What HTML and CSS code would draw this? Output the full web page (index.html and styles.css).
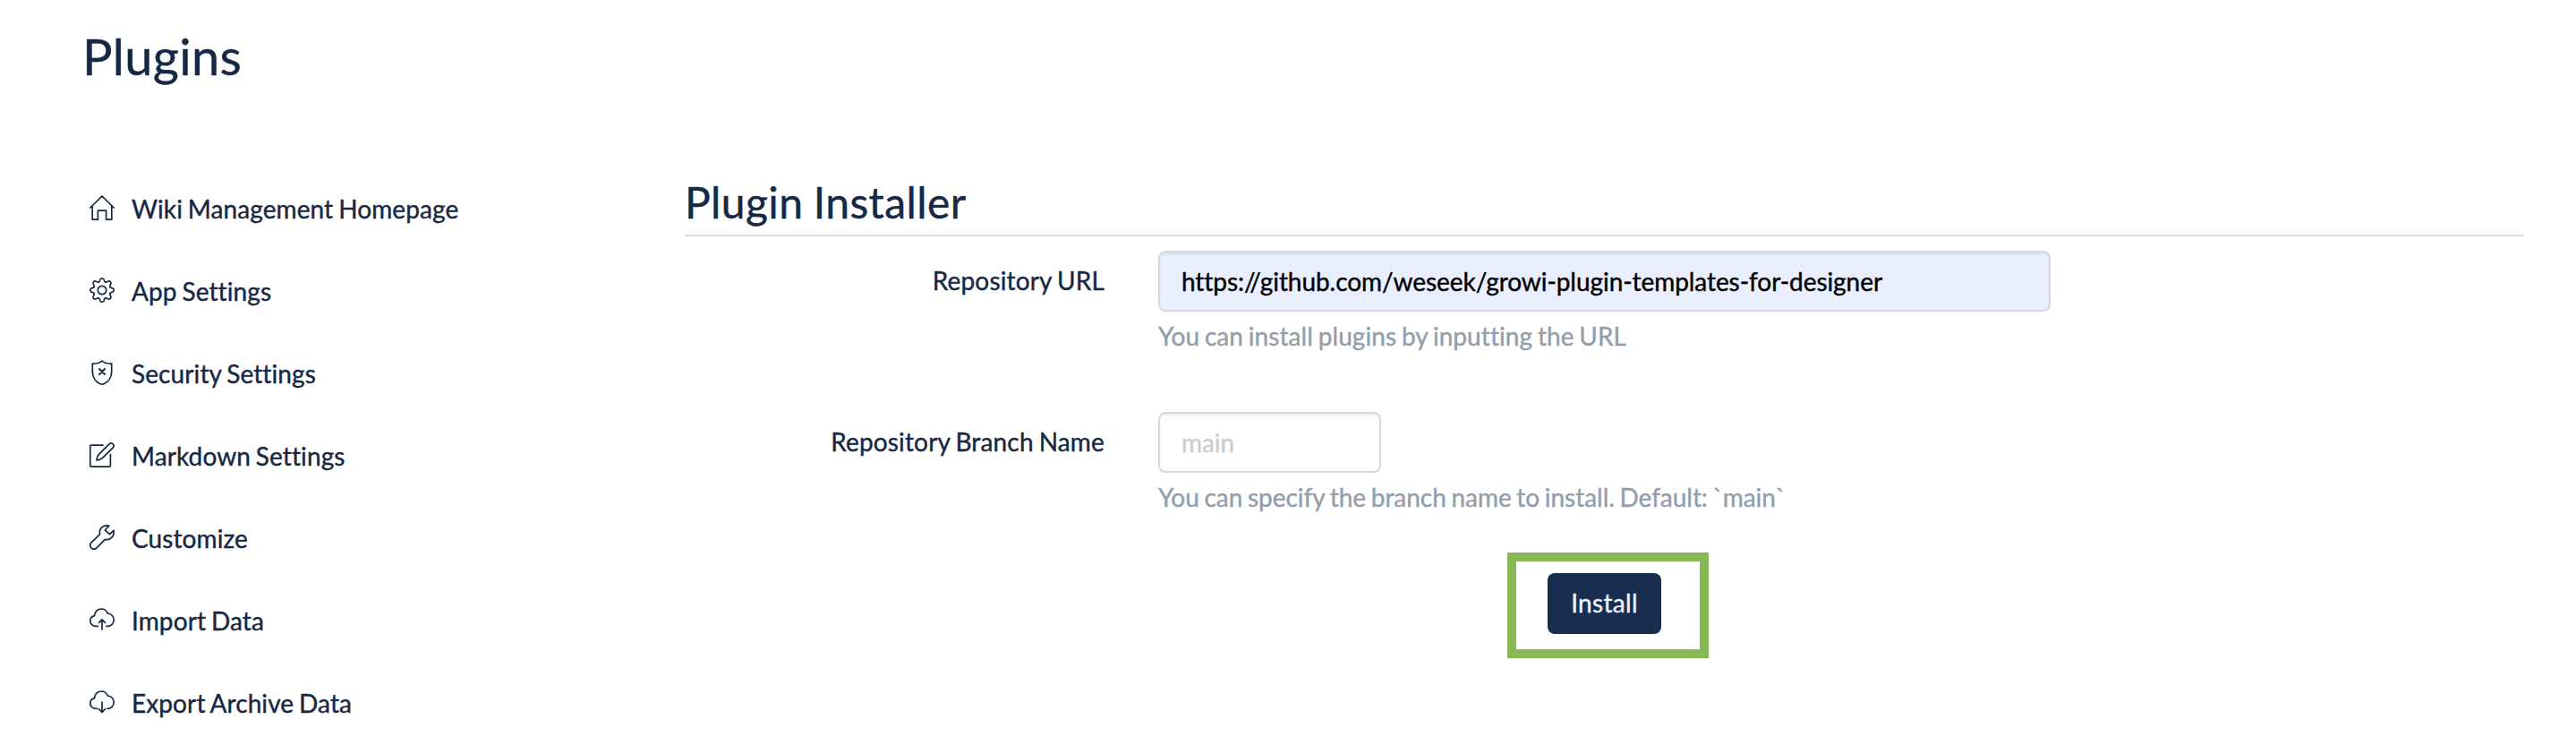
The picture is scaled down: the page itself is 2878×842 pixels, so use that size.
FILE: index.html
```html
<!DOCTYPE html>
<html lang="en">
<head>
<meta charset="utf-8">
<title>Plugins</title>
<link rel="stylesheet" href="styles.css">
</head>
<body>
<header class="page-header"><h1 class="page-title">Plugins</h1></header>
<div class="layout">
  <nav class="side-nav">
    <a class="nav-item"><svg class="icon" viewBox="0 0 28 28"><path d="M.8 14 14 1l13.200 13M3.200 12v15.200h6.200V17.200h9.200v10h6.200V12"/></svg><span>Wiki Management Homepage</span></a>
    <a class="nav-item"><svg class="icon" viewBox="0 0 28 28"><defs><path id="tooth" d="M-3.700-8.900C-2.600-9.400-2.600-10-2.300-11.300-2-12.900-1-13.200 0-13.200S2-12.900 2.300-11.300C2.600-10 2.600-9.400 3.700-8.900"/></defs><g transform="translate(14 14)"><use href="#tooth"/><use href="#tooth" transform="rotate(45)"/><use href="#tooth" transform="rotate(90)"/><use href="#tooth" transform="rotate(135)"/><use href="#tooth" transform="rotate(180)"/><use href="#tooth" transform="rotate(225)"/><use href="#tooth" transform="rotate(270)"/><use href="#tooth" transform="rotate(315)"/><circle r="4.700"/></g></svg><span>App Settings</span></a>
    <a class="nav-item"><svg class="icon" viewBox="0 0 28 28"><path d="M14 1C11.500 3.400 7 4.200 3.300 4v8.500C3.300 20 7.500 25.500 14 27.200c6.500-1.700 10.700-7.200 10.700-14.700V4C21 4.200 16.500 3.400 14 1Z"/><path class="bold" d="m11 10 6 6m0-6-6 6"/></svg><span>Security Settings</span></a>
    <a class="nav-item"><svg class="icon" viewBox="0 0 28 28"><path d="M15 3.200H2Q.8 3.200.8 4.400V26q0 1.200 1.200 1.200h20.200q1.200 0 1.200-1.200V13.500"/><path d="M8 20c.3-3 1-5 2.700-6.800L22 1.900c2.900-2.700 6.900 1.100 4.200 4L14.800 17.200C13 19 11 19.700 8 20Z"/></svg><span>Markdown Settings</span></a>
    <a class="nav-item"><svg class="icon" viewBox="0 0 28 28"><path d="M21.800 1.100C15.500-.4 10.200 4 11.600 10.600L2 19.900c-1.600 1.600-1.600 4 0 5.900 1.700 1.800 4.300 1.800 6 .1l9.300-9.500c6.400 1.200 10.800-3.900 9.700-10.100L22.500 10.700 17.300 6Z"/></svg><span>Customize</span></a>
    <a class="nav-item"><svg class="icon" viewBox="0 0 28 28"><path d="M9.200 21.400H7.500C3.500 21.400.8 18.700.8 15.400c0-2.900 1.900-5.200 4.700-5.800C5.800 5.200 9 2 13.200 2c3.300 0 6 2 7.100 5 4 .3 6.900 3.400 6.900 7.200 0 4-3.200 7.200-7.200 7.200h-1.200M14 24.800V14m-3.500 3.300L14 13.800l3.500 3.500"/></svg><span>Import Data</span></a>
    <a class="nav-item"><svg class="icon" viewBox="0 0 28 28"><path d="M8.500 21.400h-1C3.500 21.400.8 18.700.8 15.400c0-2.900 1.900-5.200 4.700-5.800C5.800 5.200 9 2 13.200 2c3.300 0 6 2 7.100 5 4 .3 6.900 3.400 6.900 7.200 0 4-3.200 7.200-7.200 7.200M14 14v11m-3.500-3.200L14 25.300l3.500-3.500"/></svg><span>Export Archive Data</span></a>
  </nav>
  <main class="content">
    <h2 class="section-title">Plugin Installer</h2>
    <form class="form">
      <div class="form-row">
        <label class="label" for="url">Repository URL</label>
        <div class="field">
          <input class="control filled" id="url" type="text" value="https://github.com/weseek/growi-plugin-templates-for-designer">
          <p class="help">You can install plugins by inputting the URL</p>
        </div>
      </div>
      <div class="form-row">
        <label class="label" for="branch">Repository Branch Name</label>
        <div class="field">
          <input class="control short" id="branch" type="text" placeholder="main">
          <p class="help branch-help">You can specify the branch name to install. Default: `main`</p>
        </div>
      </div>
      <div class="highlight"><button class="install" type="button">Install</button></div>
    </form>
  </main>
</div>
</body>
</html>
```
FILE: styles.css
```css
* { box-sizing: border-box; }
body { margin: 0; height: 842px; overflow: hidden; background: #fff; color: #162843; font: 28px/42px Lato, sans-serif; font-variant-ligatures: none; letter-spacing: .1px; word-spacing: -1.4px; -webkit-text-stroke: .4px currentColor; }
.page-header { height: 188px; padding: 29px 0 0 92px; }
.page-title { margin: 0; font-size: 56px; line-height: 67px; font-weight: 400; letter-spacing: .3px; }
.layout { display: flex; padding-right: 58px; }
.side-nav { flex: 0 0 765px; padding-left: 100px; }
.nav-item { display: flex; align-items: center; height: 92px; }
.nav-item span { padding: 0 0 2px 19px; }
.icon { width: 28px; height: 28px; margin-top: -4px; fill: none; stroke: currentColor; stroke-width: 1.7; stroke-linecap: round; stroke-linejoin: round; overflow: visible; }
.icon .bold { stroke-width: 2; }
.content { flex: 1; }
.section-title { margin: 0; height: 76px; padding-top: 9px; border-bottom: 2px solid #d5dae0; font-size: 48px; line-height: 58px; font-weight: 400; letter-spacing: .4px; }
.form { padding-top: 16px; }
.form-row { display: flex; gap: 60px; height: 180px; }
.label { width: 469px; padding-top: 12px; text-align: right; letter-spacing: .17px; }
.field { width: 997px; }
.control { display: block; width: 100%; height: 68px; padding: 0 24px; border: 2px solid #d5dae0; border-radius: 8px; background: #fff; box-shadow: inset 0 2px 2px rgba(0, 0, 0, .075); font: inherit; font-variant-ligatures: none; letter-spacing: -.06px; color: #000; -webkit-text-stroke: inherit; }
.filled { background: #e9effe; }
.short { width: 249px; }
.control::placeholder { color: #ccc; opacity: 1; }
.help { margin: 6px 0 0; color: #929eac; letter-spacing: .06px; }
.branch-help { letter-spacing: -.04px; }
.highlight { width: 225px; height: 118px; margin: -23px 0 0 919px; padding: 13px 35px; border: 10px solid #88b854; }
.install { display: block; width: 127px; height: 68px; padding: 0 0 2px; border: 0; border-radius: 8px; background: #192d51; color: #eef2fb; font: inherit; letter-spacing: .3px; -webkit-text-stroke: inherit; }
```
